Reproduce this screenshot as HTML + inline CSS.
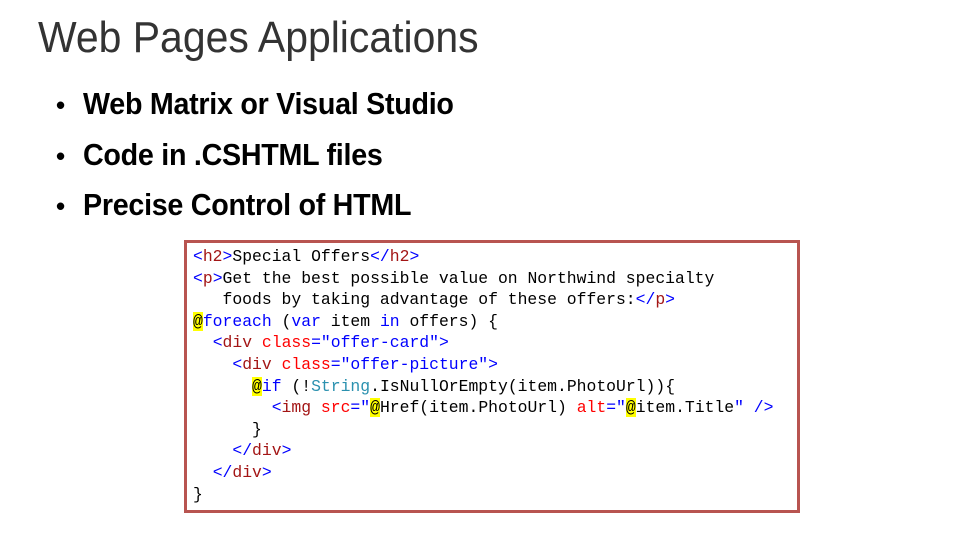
<!DOCTYPE html>
<html><head><meta charset="utf-8"><style>
html,body{margin:0;padding:0;background:#fff;width:960px;height:540px;overflow:hidden;position:relative}
.t{position:absolute;left:38px;top:10px;font:44px "Liberation Sans",sans-serif;color:#333;transform:scaleX(0.93);transform-origin:0 0;white-space:nowrap;line-height:56px}
.b{position:absolute;left:56px;font:bold 31px "Liberation Sans",sans-serif;color:#000;white-space:nowrap;line-height:40px}
.b span{display:inline-block;transform:scaleX(0.925);transform-origin:0 50%;letter-spacing:-0.3px}
.b i{font-style:normal;display:inline-block;width:27px;font-size:26px}
.box{position:absolute;left:184px;top:240px;width:610px;height:267px;border:3px solid #b85450;}
pre{position:absolute;left:193px;top:246px;margin:0;font:16.4px/21.6px "Liberation Mono",monospace;color:#000}
.tg{color:#a31515}.br{color:#0000ff}.k{color:#0000ff}.a{color:#ff0000}.s{color:#0000ff}.ty{color:#2b91af}.at{background:#ffff00}
</style></head><body>
<div class="t">Web Pages Applications</div>
<div class="b" style="top:84px"><i>•</i><span>Web Matrix or Visual Studio</span></div>
<div class="b" style="top:135px"><i>•</i><span>Code in .CSHTML files</span></div>
<div class="b" style="top:185px"><i>•</i><span>Precise Control of HTML</span></div>
<div class="box"></div>
<pre><span class="br">&lt;</span><span class="tg">h2</span><span class="br">&gt;</span>Special Offers<span class="br">&lt;/</span><span class="tg">h2</span><span class="br">&gt;</span>
<span class="br">&lt;</span><span class="tg">p</span><span class="br">&gt;</span>Get the best possible value on Northwind specialty
   foods by taking advantage of these offers:<span class="br">&lt;/</span><span class="tg">p</span><span class="br">&gt;</span>
<span class="at">@</span><span class="k">foreach</span> (<span class="k">var</span> item <span class="k">in</span> offers) {
  <span class="br">&lt;</span><span class="tg">div</span> <span class="a">class</span><span class="s">="offer-card"</span><span class="br">&gt;</span>
    <span class="br">&lt;</span><span class="tg">div</span> <span class="a">class</span><span class="s">="offer-picture"</span><span class="br">&gt;</span>
      <span class="at">@</span><span class="k">if</span> (!<span class="ty">String</span>.IsNullOrEmpty(item.PhotoUrl)){
        <span class="br">&lt;</span><span class="tg">img</span> <span class="a">src</span><span class="s">="</span><span class="at">@</span>Href(item.PhotoUrl) <span class="a">alt</span><span class="s">="</span><span class="at">@</span>item.Title<span class="s">"</span> <span class="br">/&gt;</span>
      }
    <span class="br">&lt;/</span><span class="tg">div</span><span class="br">&gt;</span>
  <span class="br">&lt;/</span><span class="tg">div</span><span class="br">&gt;</span>
}</pre>
</body></html>
